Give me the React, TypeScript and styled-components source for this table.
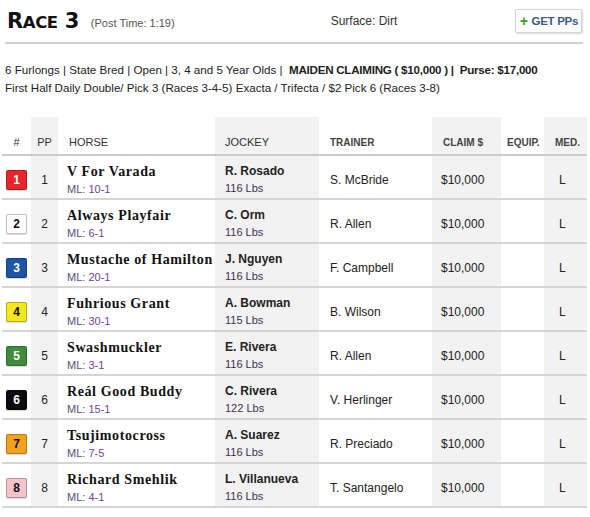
import React from 'react';
import styled, { createGlobalStyle } from 'styled-components';

const GlobalStyle = createGlobalStyle`
  html, body {
    margin: 0;
    padding: 0;
    background: #ffffff;
    font-family: "Liberation Sans", Arial, sans-serif;
    color: #222;
  }
`;

const Page = styled.div`
  width: 590px;
  height: 517px;
  overflow: hidden;
`;

const TopBar = styled.div`
  margin: 0 7px 0 5px;
  height: 42px;
  border-bottom: 2px solid #cfcfcf;
  display: flex;
  align-items: center;
  padding-left: 2px;
`;

const Title = styled.h1`
  margin: 0;
  font-family: "DejaVu Sans", "Liberation Sans", sans-serif;
  font-size: 21px;
  font-weight: 700;
  letter-spacing: -0.4px;
  color: #111;
`;

const SmallCaps = styled.span`
  font-size: 16.5px;
`;

const PostTime = styled.span`
  margin-left: 12px;
  margin-top: 4px;
  font-size: 11px;
  color: #555;
`;

const Surface = styled.span`
  margin-left: 156px;
  font-size: 12px;
  color: #333;
`;

const GetButton = styled.button`
  margin-left: auto;
  margin-right: 1px;
  height: 24px;
  padding: 0 3px 0 4px;
  background: #fff;
  border: 1px solid #d4d4d4;
  border-radius: 2px;
  box-shadow: 1px 1px 2px rgba(0, 0, 0, 0.15);
  font-family: "Liberation Sans", Arial, sans-serif;
  font-size: 11.5px;
  font-weight: 700;
  letter-spacing: -0.3px;
  color: #3b5c80;
  display: flex;
  align-items: center;
  gap: 4px;
`;

const Plus = styled.span`
  color: #3b9a2a;
  font-size: 14px;
  font-weight: 700;
`;

const Info = styled.div`
  padding: 17px 0 0 5px;
  font-size: 11.6px;
  line-height: 18px;
  color: #222;
  height: 56px;
`;

const Strong = styled.b`
  font-weight: 700;
  letter-spacing: -0.25px;
`;

const Table = styled.table`
  margin-left: 2px;
  width: 585px;
  border-collapse: collapse;
  table-layout: fixed;
`;

const Col = styled.col<{ $shade?: boolean }>`
  background: ${p => (p.$shade ? '#f2f2f2' : 'transparent')};
`;

const Th = styled.th<{ $align?: string; $pl?: number }>`
  height: 31px;
  padding: 0 0 6px ${p => p.$pl ?? 0}px;
  vertical-align: bottom;
  text-align: ${p => p.$align || 'left'};
  font-size: 11px;
  font-weight: 400;
  color: #333;
  border-bottom: 2px solid #cccccc;
`;

const HeadBold = styled.span`
  font-weight: 700;
  font-size: 10px;
  color: #444;
`;

const Td = styled.td<{ $align?: string; $pl?: number }>`
  height: 44px;
  box-sizing: border-box;
  padding: 5px 0 0 ${p => p.$pl ?? 0}px;
  text-align: ${p => p.$align || 'left'};
  vertical-align: middle;
  font-size: 12px;
  color: #222;
  border-bottom: 2px solid #d6d6d6;
`;

const Badge = styled.div<{ $bg: string; $fg: string }>`
  width: 19px;
  height: 18px;
  margin-left: 4px;
  border: 1px solid rgba(0, 0, 0, 0.25);
  border-radius: 2px;
  background: ${p => p.$bg};
  color: ${p => p.$fg};
  font-size: 12px;
  font-weight: 700;
  line-height: 18px;
  text-align: center;
  box-shadow: 0 1px 1px rgba(0, 0, 0, 0.15);
`;

const Cell = styled.span`
  display: inline-block;
  font-size: 12px;
`;

const HorseName = styled.div`
  font-family: "Liberation Serif", "Times New Roman", serif;
  font-size: 14px;
  font-weight: 700;
  letter-spacing: 0.6px;
  color: #111;
  line-height: 16px;
  white-space: nowrap;
`;

const SubLine = styled.div`
  margin-top: 3px;
  font-size: 11px;
  line-height: 13px;
  color: #5d4c7a;
`;

const Odds = styled.span`
  color: #75429a;
`;

const JockeyName = styled.div`
  font-size: 12px;
  font-weight: 700;
  line-height: 15px;
  color: #222;
`;

const Lbs = styled.div`
  margin-top: 3px;
  font-size: 11px;
  line-height: 13px;
  color: #3d3055;
`;

type Runner = {
  n: number;
  horse: string;
  ml: string;
  jockey: string;
  lbs: number;
  trainer: string;
};

const BADGES: Record<number, [string, string]> = {
  1: ['#e7262b', '#ffffff'],
  2: ['#ffffff', '#111111'],
  3: ['#1c55a6', '#ffffff'],
  4: ['#f2e81c', '#111111'],
  5: ['#3f8c3c', '#ffffff'],
  6: ['#0a0a0a', '#ffffff'],
  7: ['#f4a11d', '#111111'],
  8: ['#f6c3cc', '#111111'],
};

const RUNNERS: Runner[] = [
  { n: 1, horse: 'V For Varada', ml: '10-1', jockey: 'R. Rosado', lbs: 116, trainer: 'S. McBride' },
  { n: 2, horse: 'Always Playfair', ml: '6-1', jockey: 'C. Orm', lbs: 116, trainer: 'R. Allen' },
  { n: 3, horse: 'Mustache of Hamilton', ml: '20-1', jockey: 'J. Nguyen', lbs: 116, trainer: 'F. Campbell' },
  { n: 4, horse: 'Fuhrious Grant', ml: '30-1', jockey: 'A. Bowman', lbs: 115, trainer: 'B. Wilson' },
  { n: 5, horse: 'Swashmuckler', ml: '3-1', jockey: 'E. Rivera', lbs: 116, trainer: 'R. Allen' },
  { n: 6, horse: 'Reál Good Buddy', ml: '15-1', jockey: 'C. Rivera', lbs: 122, trainer: 'V. Herlinger' },
  { n: 7, horse: 'Tsujimotocross', ml: '7-5', jockey: 'A. Suarez', lbs: 116, trainer: 'R. Preciado' },
  { n: 8, horse: 'Richard Smehlik', ml: '4-1', jockey: 'L. Villanueva', lbs: 116, trainer: 'T. Santangelo' },
];

export default function App() {
  return (
    <Page>
      <GlobalStyle />
      <TopBar>
        <Title>
          R<SmallCaps>ACE</SmallCaps> 3
        </Title>
        <PostTime>(Post Time: 1:19)</PostTime>
        <Surface>Surface: Dirt</Surface>
        <GetButton>
          <Plus>+</Plus>GET PPs
        </GetButton>
      </TopBar>

      <Info>
        <div>
          6 Furlongs | State Bred | Open | 3, 4 and 5 Year Olds |&nbsp;{' '}
          <Strong>MAIDEN CLAIMING ( $10,000 ) |&nbsp; Purse: $17,000</Strong>
        </div>
        <div>First Half Daily Double/ Pick 3 (Races 3-4-5) Exacta / Trifecta / $2 Pick 6 (Races 3-8)</div>
      </Info>

      <Table>
        <colgroup>
          <Col style={{ width: 29 }} />
          <Col $shade style={{ width: 27 }} />
          <Col style={{ width: 157 }} />
          <Col $shade style={{ width: 104 }} />
          <Col style={{ width: 113 }} />
          <Col $shade style={{ width: 69 }} />
          <Col style={{ width: 43 }} />
          <Col $shade style={{ width: 43 }} />
        </colgroup>
        <thead>
          <tr>
            <Th $align="center">#</Th>
            <Th $align="center">PP</Th>
            <Th $pl={11}>HORSE</Th>
            <Th $pl={10}>JOCKEY</Th>
            <Th $pl={11}><HeadBold>TRAINER</HeadBold></Th>
            <Th $pl={11}><HeadBold>CLAIM $</HeadBold></Th>
            <Th $pl={6}><HeadBold>EQUIP.</HeadBold></Th>
            <Th $pl={11}><HeadBold>MED.</HeadBold></Th>
          </tr>
        </thead>
        <tbody>
          {RUNNERS.map(r => {
            const [bg, fg] = BADGES[r.n];
            return (
              <tr key={r.n}>
                <Td>
                  <Badge $bg={bg} $fg={fg}>{r.n}</Badge>
                </Td>
                <Td $align="center"><Cell>{r.n}</Cell></Td>
                <Td $pl={9}>
                  <HorseName>{r.horse}</HorseName>
                  <SubLine>ML: <Odds>{r.ml}</Odds></SubLine>
                </Td>
                <Td $pl={10}>
                  <JockeyName>{r.jockey}</JockeyName>
                  <Lbs>{r.lbs} Lbs</Lbs>
                </Td>
                <Td $pl={11}><Cell>{r.trainer}</Cell></Td>
                <Td $pl={9}><Cell>$10,000</Cell></Td>
                <Td />
                <Td $pl={15}><Cell>L</Cell></Td>
              </tr>
            );
          })}
        </tbody>
      </Table>
    </Page>
  );
}
